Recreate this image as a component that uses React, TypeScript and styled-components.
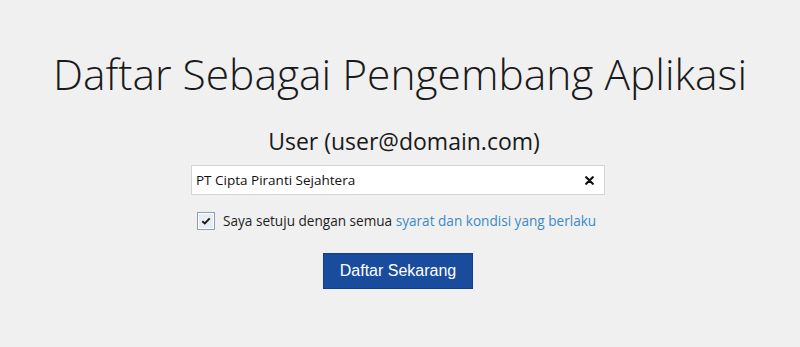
import { useState } from "react"
import styled, { createGlobalStyle } from "styled-components"

const GlobalStyle = createGlobalStyle`
  html, body {
    margin: 0;
    padding: 0;
    background: #f0f0f0;
  }
  body {
    font-family: "Open Sans", "Noto Sans", sans-serif;
    color: #1e1e1e;
  }
`

const Page = styled.main`
  width: 800px;
  height: 347px;
  display: flex;
  flex-direction: column;
  align-items: center;
  box-sizing: border-box;
  padding-top: 44px;
`

const Title = styled.h1`
  margin: 0;
  font-family: "Open Sans", sans-serif;
  font-weight: 300;
  font-size: 42.5px;
  line-height: 60px;
  color: #1a1a1a;
`

const Subtitle = styled.h2`
  margin: 22px 0 0 8px;
  font-family: "Open Sans", sans-serif;
  font-weight: 400;
  font-size: 23px;
  line-height: 30px;
  color: #1a1a1a;
`

const Form = styled.form`
  display: flex;
  flex-direction: column;
  align-items: center;
  margin: 9px 4px 0 0;
  width: 414px;
`

const Field = styled.div`
  position: relative;
  width: 100%;
  height: 30px;
`

const TextInput = styled.input`
  width: 100%;
  height: 100%;
  box-sizing: border-box;
  border: 1px solid #d4d4d4;
  background: #fff;
  padding: 0 28px 0 4px;
  font-family: "Open Sans", sans-serif;
  font-size: 13.5px;
  color: #111;
  outline: none;
`

const ClearButton = styled.button`
  position: absolute;
  right: 10px;
  top: 50%;
  transform: translateY(-50%);
  border: none;
  background: none;
  padding: 0;
  width: 12px;
  height: 12px;
  display: flex;
  align-items: center;
  justify-content: center;
  cursor: pointer;
`

const Agreement = styled.label`
  display: flex;
  align-items: center;
  gap: 8px;
  align-self: flex-start;
  margin: 16px 0 0 6px;
  font-family: "Open Sans", sans-serif;
  font-size: 13.6px;
  color: #1e1e1e;
  cursor: pointer;
`

const Box = styled.span<{ $checked: boolean }>`
  width: 18px;
  height: 18px;
  box-sizing: border-box;
  border: 1px solid #8a9fbf;
  box-shadow: inset 0 0 0 1px #fff;
  background: #e8edf4;
  display: flex;
  align-items: center;
  justify-content: center;
  svg {
    visibility: ${(p) => (p.$checked ? "visible" : "hidden")};
  }
`

const Link = styled.a`
  color: #3b8ac6;
  text-decoration: none;
`

const Submit = styled.button`
  margin-top: 23px;
  width: 150px;
  height: 36px;
  border: 1px solid #0f3e8c;
  background: #1a4c9e;
  color: #fff;
  font-family: "Liberation Sans", Arial, sans-serif;
  font-size: 16px;
  cursor: pointer;
`

export default function App() {
  const [company, setCompany] = useState("PT Cipta Piranti Sejahtera")
  const [agreed, setAgreed] = useState(true)

  return (
    <>
      <GlobalStyle />
      <Page>
        <Title>Daftar Sebagai Pengembang Aplikasi</Title>
        <Subtitle>User (user@domain.com)</Subtitle>
        <Form onSubmit={(e) => e.preventDefault()}>
          <Field>
            <TextInput value={company} onChange={(e) => setCompany(e.target.value)} />
            <ClearButton type="button" aria-label="Hapus" onClick={() => setCompany("")}>
              <svg width="9" height="9" viewBox="0 0 9 9">
                <path d="M1.2 1.2 L7.8 7.8 M7.8 1.2 L1.2 7.8" stroke="#111" strokeWidth="2.2" strokeLinecap="round" />
              </svg>
            </ClearButton>
          </Field>
          <Agreement onClick={() => setAgreed(!agreed)}>
            <Box $checked={agreed}>
              <svg width="10" height="8" viewBox="0 0 10 8">
                <path d="M1.3 4.2 L3.8 6.5 L8.7 1.3" fill="none" stroke="#1a1a1a" strokeWidth="1.9" />
              </svg>
            </Box>
            <span>
              Saya setuju dengan semua <Link href="#">syarat dan kondisi yang berlaku</Link>
            </span>
          </Agreement>
          <Submit type="submit">Daftar Sekarang</Submit>
        </Form>
      </Page>
    </>
  )
}
